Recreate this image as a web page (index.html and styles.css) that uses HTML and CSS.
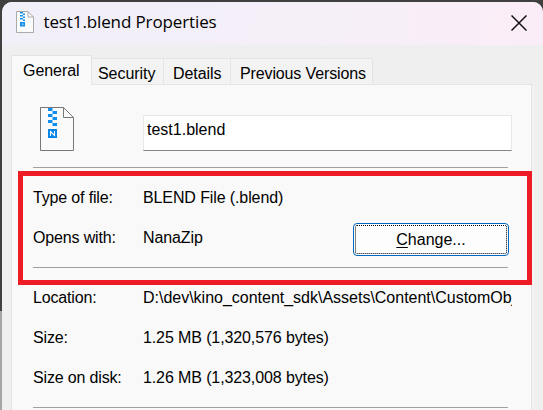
FILE: index.html
```
<!DOCTYPE html>
<html lang="en">
<head>
<meta charset="utf-8">
<title>test1.blend Properties</title>
<link rel="stylesheet" href="styles.css">
</head>
<body>
<div class="window">
  <header class="titlebar">
    <svg class="title-icon" width="18" height="22" viewBox="0 0 18 22">
      <path d="M.5.5H12L17.500 6V21.500H.5Z" fill="#fbfbfc" stroke="#aaa"/>
      <path d="M12 .5V6H17.500" fill="none" stroke="#aaa"/>
      <path d="M4 1h3v1.500H4zM7 2.500h2V4H7zM4 4h3v1.500H4zM7 5.500h2V7H7zM4 7h3v1.500H4zM7 8.500h2V10H7z" fill="#1590ec"/>
      <rect x="4" y="11" width="5" height="4.500" fill="#1590ec"/>
      <path d="M6 12.500h1.500v1.500H6z" fill="#9ed2fa"/>
    </svg>
    <h1 class="title">test1.blend Properties</h1>
    <svg class="close" width="16" height="16" viewBox="0 0 16 16"><path d="M.5.5L15.500 15.500M15.500.5L.5 15.500" stroke="#161318" stroke-width="1.500"/></svg>
  </header>
  <nav class="tabs">
    <div class="tab active">General</div>
    <div class="tab security">Security</div>
    <div class="tab details">Details</div>
    <div class="tab versions">Previous Versions</div>
  </nav>
  <main class="panel">
    <div class="file">
      <svg width="34" height="44" viewBox="0 0 34 44">
        <path d="M.5.5H23.500L33.500 10.500V43.500H.5Z" fill="#fafafa" stroke="#777"/>
        <path d="M23.500.5V10.500H33.500" fill="none" stroke="#777"/>
        <path d="M12.500 1V19" stroke="#8acbf8"/>
        <path d="M8 1h4v3H8zM13 4h4v3h-4zM8 7h4v3H8zM13 10h4v3h-4zM8 13h4v3H8zM13 16h4v3h-4z" fill="#0c8ff0"/>
        <rect x="8" y="22" width="9" height="9" rx=".5" fill="#0583e9"/>
        <path d="M10.500 29V24.500L14.500 28.500V24" fill="none" stroke="#fff" stroke-width="1.100"/>
      </svg>
      <div class="name">test1.blend</div>
    </div>
    <hr>
    <dl class="group association">
      <dt>Type of file:</dt><dd>BLEND File (.blend)</dd>
      <dt>Opens with:</dt><dd>NanaZip<button class="change"><u>C</u>hange...</button></dd>
    </dl>
    <hr>
    <dl class="group">
      <dt>Location:</dt><dd class="clip">D:\dev\kino_content_sdk\Assets\Content\CustomObj</dd>
      <dt>Size:</dt><dd>1.25 MB (1,320,576 bytes)</dd>
      <dt>Size on disk:</dt><dd>1.26 MB (1,323,008 bytes)</dd>
    </dl>
    <hr>
  </main>
  <div class="highlight"></div>
</div>
</body>
</html>
```
FILE: styles.css
```
* { box-sizing: border-box; }
body {
  margin: 0;
  width: 543px;
  height: 410px;
  padding: 2px 0 0 2px;
  overflow: hidden;
  background: linear-gradient(#414041 0 311px, #a5a5a5 311px);
  font: 16px/20px "Liberation Sans", Arial, sans-serif;
  color: #000;
}
.window {
  height: 408px;
  overflow: hidden;
  border-radius: 10px 10px 0 0;
  background: #efefef;
}
.titlebar {
  display: flex;
  align-items: flex-start;
  height: 43px;
  padding: 9px 16px 0 14px;
  background: linear-gradient(100deg, #f1eff8, #f5eff8 60%, #fbedf7);
}
.title {
  flex: 1;
  margin: -1px 0 0 9.5px;
  font: 17px/24px "Open Sans", "Segoe UI", sans-serif;
  letter-spacing: -0.12px;
  white-space: nowrap;
}
.close { margin-top: 4px; }
.tabs {
  display: flex;
  align-items: flex-end;
  height: 40px;
  padding-left: 9px;
  position: relative;
}
.tab {
  height: 27px;
  padding: 5px 0 0 6px;
  border: 1px solid #e4e4e4;
  border-left: 0;
  background: #f3f3f3;
  white-space: nowrap;
  letter-spacing: -0.05px;
}
.active {
  width: 81px;
  height: 30px;
  padding: 5px 0 0 11px;
  border-left: 1px solid #e4e4e4;
  border-bottom: 0;
  background: #f9f9f9;
}
.security { width: 72px; }
.details { width: 67px; padding-left: 9px; }
.versions { width: 142px; padding-left: 9px; letter-spacing: -0.13px; }
.panel {
  width: 521px;
  height: 340px;
  margin: -1px 0 0 9px;
  padding: 22px 20px 0 21px;
  border: 1px solid #e4e4e4;
  background: #f9f9f9;
  box-shadow: 2px 2px #f3f3f3;
}
.file { display: flex; height: 60px; padding-left: 7px; }
.name {
  width: 369px;
  height: 36px;
  margin: 8px -3px 0 69px;
  padding: 4px 0 0 3px;
  border: 1px solid #e8e8e8;
  border-bottom-color: #858585;
  background: #fff;
}
hr { width: 475px; height: 1px; margin: 0; border: 0; background: #a0a0a0; }
.group {
  display: grid;
  grid-template-columns: 110px 369px;
  grid-auto-rows: 40px;
  margin: 0;
  padding-top: 20px;
  height: 139px;
  white-space: nowrap;
}
.association { height: 99px; }
dt, dd { margin: 0; }
dt { letter-spacing: -0.16px; }
dd { display: flex; letter-spacing: -0.11px; }
.clip { overflow: hidden; letter-spacing: -0.01px; }
.change {
  width: 156px;
  height: 33px;
  margin: -5px 3px 0 auto;
  padding: 0;
  border: 1px solid #0067c0;
  border-radius: 4px;
  background: #fdfdfd;
  outline: 1px dotted #000;
  outline-offset: -3px;
  font: inherit;
}
.change u { text-underline-offset: 2px; }
.highlight {
  position: absolute;
  left: 18px;
  top: 171px;
  width: 514px;
  height: 114px;
  border: 5px solid #ed1c24;
}
```
